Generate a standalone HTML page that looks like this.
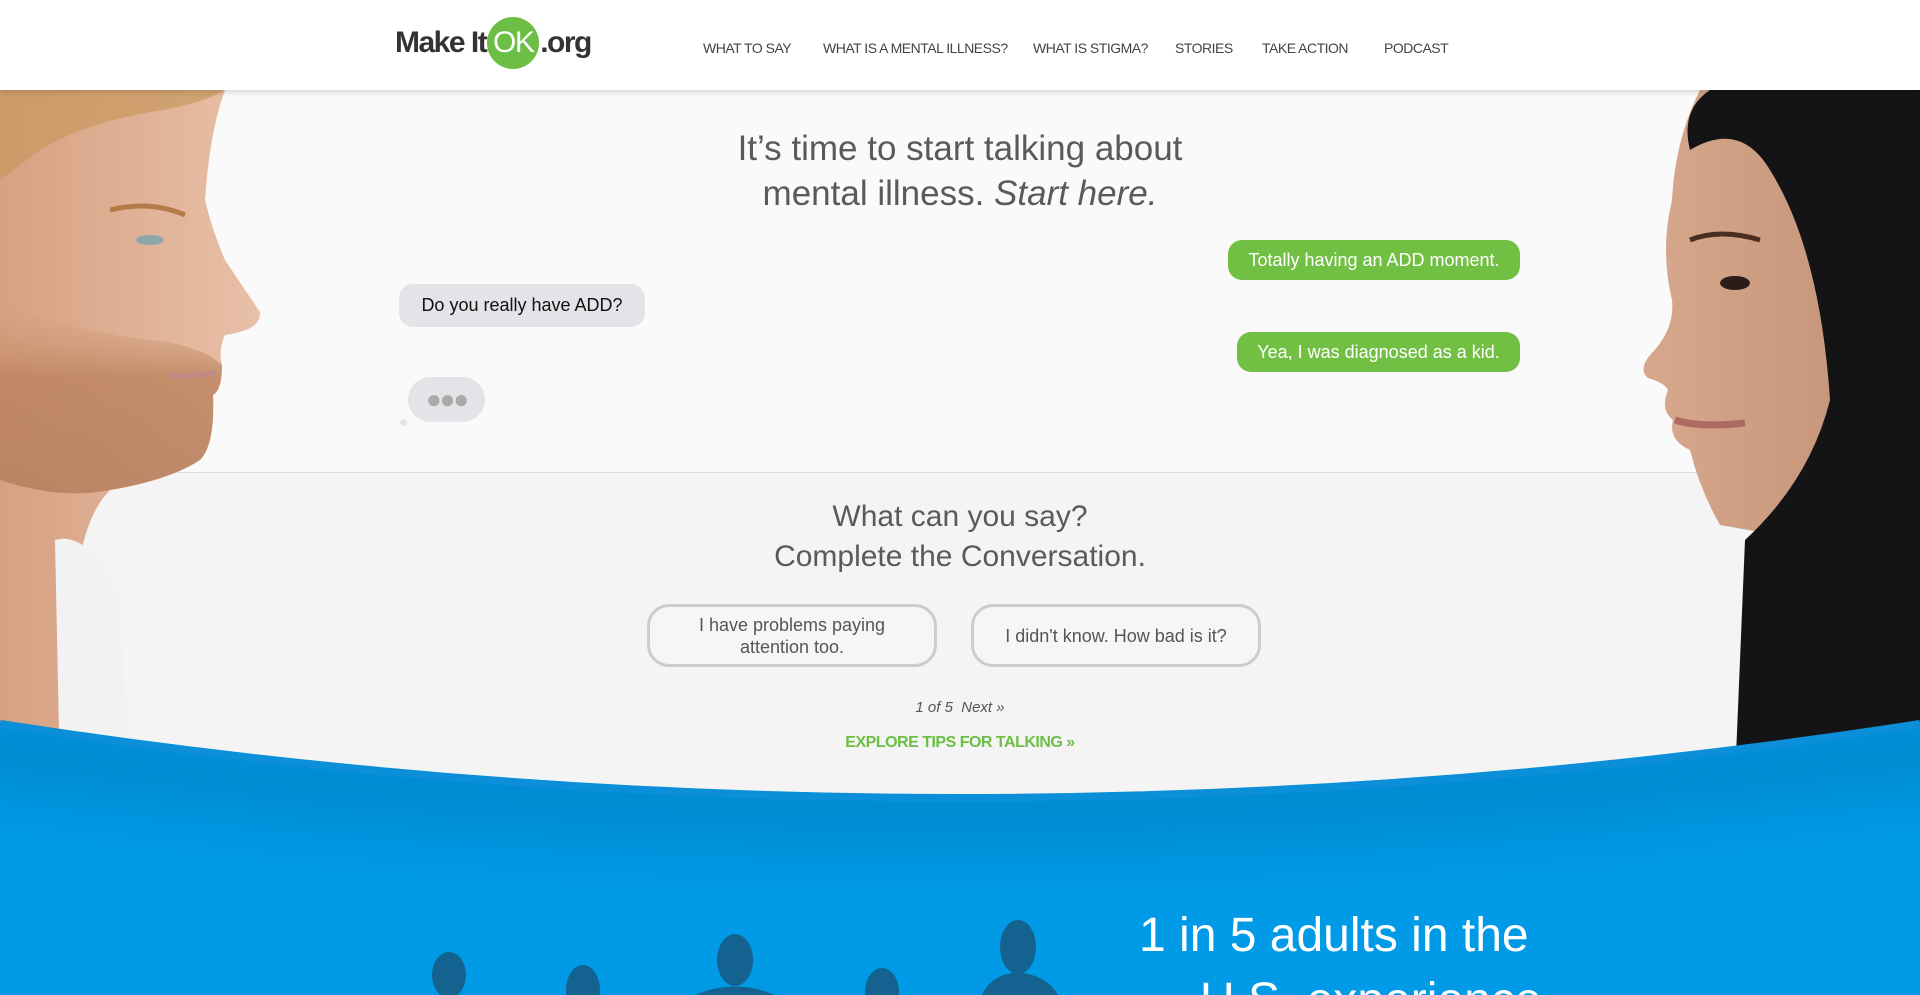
<!DOCTYPE html>
<html style="overflow:hidden;height:995px"><head><meta charset="utf-8">
<style>
*{margin:0;padding:0;box-sizing:border-box}
html,body{overflow:hidden}
body{width:1920px;height:995px;overflow:hidden;background:#f4f4f4;font-family:"Liberation Sans",sans-serif;position:relative}
.hdr{position:absolute;left:0;top:0;width:1920px;height:90px;background:#fff;box-shadow:0 2px 6px rgba(0,0,0,.15);z-index:5}
.logo{position:absolute;left:395px;top:16px;height:54px;font-weight:bold;font-size:30px;color:#333;letter-spacing:-1.5px}
.logo span{display:inline-block;vertical-align:middle}
.ok{width:52px;height:52px;border-radius:50%;background:#6cbf44;color:#fff;text-align:center;line-height:52px;margin:0 1px;font-weight:normal}
.nav{position:absolute;top:40px;font-size:14px;color:#444;letter-spacing:-.5px}
.top{position:absolute;left:0;top:90px;width:1920px;height:383px;background:#fafafa;border-bottom:1px solid #ddd}
.h1{position:absolute;left:0;width:1920px;text-align:center;font-size:35px;color:#5a5a5a;line-height:45px}
.bub{position:absolute;border-radius:14px;font-size:18px;text-align:center}
.g{background:#72c043;color:#fff}
.gr{background:#e4e4e8;color:#111}
.ob{position:absolute;border:3px solid #ccc;border-radius:22px;background:#f6f6f6;color:#555;font-size:18px;text-align:center;display:flex;align-items:center;justify-content:center;line-height:22px}
.c{position:absolute;left:0;width:1920px;text-align:center}
</style></head><body>
<div class="top"></div>
<div class="hdr">
 <div class="logo"><span style="line-height:54px">Make It</span><span class="ok">OK</span><span style="line-height:54px">.org</span></div>
 <div class="nav" style="left:703px">WHAT TO SAY</div>
 <div class="nav" style="left:823px">WHAT IS A MENTAL ILLNESS?</div>
 <div class="nav" style="left:1033px">WHAT IS STIGMA?</div>
 <div class="nav" style="left:1175px">STORIES</div>
 <div class="nav" style="left:1262px">TAKE ACTION</div>
 <div class="nav" style="left:1384px">PODCAST</div>
</div>

<svg style="position:absolute;left:0;top:0" width="1920" height="995">
 <defs>
  <linearGradient id="sk" x1="0" y1="0" x2="1" y2="0"><stop offset="0" stop-color="#d7a083"/><stop offset="1" stop-color="#e8c0a8"/></linearGradient>
  <linearGradient id="bd" x1="0" y1="0" x2="0" y2="1"><stop offset="0" stop-color="#d4a080" stop-opacity="0"/><stop offset="0.4" stop-color="#b9805a"/><stop offset="1" stop-color="#b07a58"/></linearGradient>
  <linearGradient id="sk2" x1="0" y1="0" x2="1" y2="0"><stop offset="0" stop-color="#d7a88c"/><stop offset="1" stop-color="#c08f74"/></linearGradient>
  <filter id="bl" x="-20%" y="-300%" width="140%" height="700%"><feGaussianBlur stdDeviation="30"/></filter>
  <clipPath id="cw"><path d="M0 722 Q960 870 1920 722 L1920 995 L0 995 Z"/></clipPath>
 </defs>
 <path d="M0 90 L225 90 Q210 130 205 200 Q212 230 225 260 Q245 290 260 312 Q262 330 225 335 Q218 350 222 365 Q222 390 213 395 Q215 445 200 460 Q170 480 110 490 Q80 520 75 600 L80 780 L0 780 Z" fill="url(#sk)"/>
 <path d="M0 300 Q60 330 150 340 Q200 345 222 365 Q222 390 213 395 Q215 445 200 460 Q170 480 110 490 Q60 500 0 480 Z" fill="url(#bd)" opacity=".75"/>
 <path d="M0 90 L225 90 Q200 105 150 112 Q80 125 40 150 L0 180 Z" fill="#c9985e" opacity=".7"/>
 <path d="M110 210 Q150 200 185 215" stroke="#b47a4a" stroke-width="5" fill="none"/>
 <ellipse cx="150" cy="240" rx="14" ry="5" fill="#8ea5a8"/>
 <path d="M170 375 Q195 378 215 372" stroke="#c08a86" stroke-width="5" fill="none"/>
 <path d="M55 540 Q90 530 120 600 L130 780 L60 780 Z" fill="#f2f2f2"/>
 <path d="M1920 90 L1700 90 Q1675 140 1672 200 Q1660 250 1672 300 Q1675 330 1650 355 Q1638 370 1648 378 Q1665 383 1668 390 Q1660 410 1673 420 Q1668 440 1690 450 Q1700 490 1720 525 L1920 560 Z" fill="url(#sk2)"/>
 <path d="M1920 90 L1710 90 Q1680 110 1690 150 Q1740 120 1770 170 Q1820 250 1830 400 Q1810 480 1745 540 L1735 780 L1920 780 Z" fill="#141416"/>
 <path d="M1690 240 Q1720 228 1760 240" stroke="#4a2e22" stroke-width="5" fill="none"/>
 <ellipse cx="1735" cy="283" rx="15" ry="7" fill="#2a1c18"/>
 <path d="M1675 420 Q1700 428 1745 423" stroke="#b06a64" stroke-width="7" fill="none"/>
 <path d="M0 722 Q960 870 1920 722 L1920 995 L0 995 Z" fill="#009ae6"/>
 <g clip-path="url(#cw)">
  <path d="M-100 740 Q960 880 2020 740" stroke="#0070aa" stroke-width="70" fill="none" filter="url(#bl)" opacity=".4"/>
 </g>
 <path d="M0 724 Q960 872 1920 724" stroke="#0a8fd8" stroke-width="8" fill="none"/>
 <g fill="#14628f">
  <ellipse cx="449" cy="975" rx="17" ry="23"/>
  <ellipse cx="583" cy="990" rx="17" ry="25"/>
  <ellipse cx="735" cy="960" rx="18" ry="26"/><path d="M695 995 Q735 978 775 995Z"/>
  <ellipse cx="882" cy="992" rx="17" ry="24"/>
  <ellipse cx="1018" cy="947" rx="18" ry="27"/><path d="M982 995 Q990 975 1018 972 Q1048 976 1058 995Z"/>
 </g>
</svg>

<div class="h1" style="top:126px">It’s time to start talking about<br>mental illness. <i>Start here.</i></div>

<div class="bub g" style="left:1228px;top:240px;width:292px;height:40px;line-height:40px">Totally having an ADD moment.</div>
<div class="bub gr" style="left:399px;top:284px;width:246px;height:43px;line-height:43px">Do you really have ADD?</div>
<div class="bub g" style="left:1237px;top:332px;width:283px;height:40px;line-height:40px">Yea, I was diagnosed as a kid.</div>
<div class="bub gr" style="left:408px;top:377px;width:77px;height:45px;border-radius:23px;line-height:45px;color:#aaa;font-size:26px;letter-spacing:-2px">●●●</div>
<div style="position:absolute;left:400px;top:419px;width:7px;height:7px;border-radius:50%;background:#e4e4e8"></div>

<div class="h1" style="top:497px;font-size:30px;line-height:40px">What can you say?<br>Complete the Conversation.</div>
<div class="ob" style="left:647px;top:604px;width:290px;height:63px">I have problems paying<br>attention too.</div>
<div class="ob" style="left:971px;top:604px;width:290px;height:63px">I didn't know. How bad is it?</div>
<div class="c" style="top:699px;font-size:15px;font-style:italic;color:#555">1 of 5 &nbsp;Next »</div>
<div class="c" style="top:734px;font-size:16px;font-weight:bold;color:#6cbf44;letter-spacing:-.5px">EXPLORE TIPS FOR TALKING »</div>

<div style="position:absolute;left:1139px;top:908px;font-size:48px;color:#fff;white-space:nowrap">1 in 5 adults in the</div>
<div style="position:absolute;left:1200px;top:975px;width:400px;height:20px;overflow:hidden"><div style="font-size:48px;line-height:56px;color:#fff;white-space:nowrap;margin-top:-2px">U.S. experience</div></div>
</body></html>
